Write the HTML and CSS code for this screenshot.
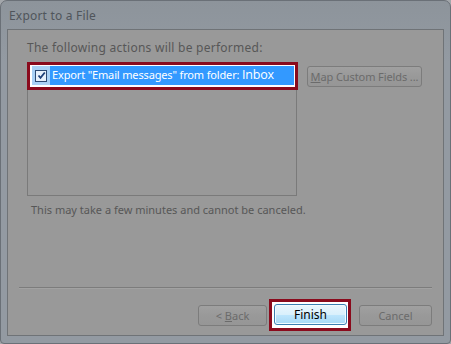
FILE: index.html
```html
<!DOCTYPE html>
<html>
<head>
<meta charset="utf-8">
<link rel="stylesheet" href="styles.css">
</head>
<body>
<div class="window">
  <div class="titlebar">Export to a File</div>
  <div class="content">
    <div class="heading">The following actions will be performed:</div>
    <div class="row">
      <div class="listbox">
        <div class="mark-list">
          <div class="item">
            <span class="check-cell">
              <span class="checkbox">
                <svg width="9" height="9" viewBox="0 0 9 9"><path d="M1.5 4.5 L3.5 6.8 L7.8 1.5" fill="none" stroke="#1c3f78" stroke-width="1.8"/></svg>
              </span>
            </span>
            <span class="item-text">Export "Email messages" from folder: <span class="folder">Inbox</span></span>
          </div>
        </div>
      </div>
      <button class="btn map"><u>M</u>ap Custom Fields ...</button>
    </div>
    <div class="note">This may take a few minutes and cannot be canceled.</div>
    <div class="spacer"></div>
    <div class="separator"></div>
    <div class="buttons">
      <button class="btn nav back">&lt; <u>B</u>ack</button>
      <div class="mark-finish"><button class="btn finish">Finish</button></div>
      <button class="btn nav cancel">Cancel</button>
    </div>
  </div>
</div>
</body>
</html>
```

FILE: styles.css
```css
html, body {
  margin: 0;
  padding: 0;
  background: #a3a7ab;
}
body {
  width: 451px;
  height: 344px;
  overflow: hidden;
  font-family: "Noto Sans", "Open Sans", sans-serif;
  font-size: 12px;
}
.window {
  box-sizing: border-box;
  width: 451px;
  height: 344px;
  background: linear-gradient(#8d949b, #939aa2 60px, #939aa2);
  border: 1px solid #6a7077;
  border-radius: 7px 7px 4px 4px;
  padding: 0 6px 7px 6px;
  display: flex;
  flex-direction: column;
}
.titlebar {
  height: 28px;
  line-height: 30px;
  padding-left: 2px;
  color: #50555b;
  font-size: 12px;
  letter-spacing: 0.2px;
}
.content {
  flex: 1;
  background: #999999;
  border: 1px solid #6f7377;
  display: flex;
  flex-direction: column;
  padding: 0 11px 4px 19px;
}
.heading {
  margin-top: 10px;
  line-height: 15px;
  color: #575757;
  letter-spacing: 0.25px;
}
.row {
  margin-top: 8px;
  display: flex;
  align-items: flex-start;
  gap: 10px;
}
.listbox {
  box-sizing: border-box;
  width: 270px;
  height: 133px;
  border: 1px solid #7a7a7a;
  background: #999;
}
.mark-list {
  box-sizing: border-box;
  margin: -2px -2px 0 -1px;
  height: 28px;
  border: 3px solid #8a0a1c;
  background: #fff;
  padding: 1px 1px 0 2px;
}
.item {
  display: flex;
  height: 19px;
}
.check-cell {
  width: 18px;
  background: #a9d1f5;
  display: flex;
  align-items: center;
  justify-content: center;
}
.checkbox {
  box-sizing: border-box;
  width: 12px;
  height: 12px;
  border: 1px solid #2c4a73;
  background: #e7f1fb;
  display: flex;
  align-items: center;
  justify-content: center;
}
.item-text {
  flex: 1;
  background: #3399ff;
  color: #fff;
  font-size: 11px;
  letter-spacing: -0.15px;
  line-height: 18px;
  padding-left: 2px;
  white-space: nowrap;
}
.folder {
  font-family: "Open Sans", "Noto Sans", sans-serif;
  font-size: 12.5px;
  letter-spacing: -0.2px;
}
.btn {
  box-sizing: border-box;
  font-family: "Noto Sans", "Open Sans", sans-serif;
  font-size: 11px;
  height: 21px;
  padding: 0;
  border: 1px solid #7c7c7c;
  border-radius: 3px;
  background: linear-gradient(#a0a0a0, #999999 50%, #969696);
  color: #6b6b6b;
  white-space: nowrap;
}
.map {
  width: 115px;
  margin-top: 3px;
  letter-spacing: -0.1px;
}
.note {
  margin-top: 6px;
  padding-left: 4px;
  line-height: 15px;
  font-size: 11px;
  color: #575757;
}
.spacer {
  flex: 1;
}
.separator {
  margin-left: -8px;
  margin-right: 0;
  height: 1px;
  background: #7c7c7c;
  border-bottom: 1px solid #a2a2a2;
}
.buttons {
  margin-top: 10px;
  display: flex;
  justify-content: flex-end;
  align-items: center;
}
.nav {
  width: 73px;
}
.back {
  width: 69px;
}
.mark-finish {
  margin: 0 8px 0 2px;
  border: 3px solid #8a0a1c;
  background: #fff;
  padding: 2px 1px 3px 2px;
  display: flex;
}
.finish {
  width: 73px;
  height: 21px;
  border: 1px solid #3c7fb1;
  background: linear-gradient(#eaf6fd, #d9f0fc 50%, #bee6fd 51%, #a7d9f5);
  box-shadow: inset 0 0 0 1px #f3fbff;
  color: #000;
  font-size: 12px;
}
```
